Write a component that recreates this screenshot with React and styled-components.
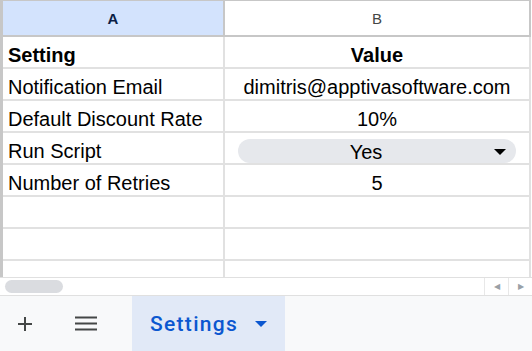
import styled, { createGlobalStyle } from "styled-components";

const GlobalStyle = createGlobalStyle`
  html, body {
    margin: 0;
    padding: 0;
    background: #ffffff;
  }
  body {
    font-family: "Liberation Sans", Arial, sans-serif;
  }
`;

export const Sheet = styled.div`
  width: 532px;
  height: 351px;
  display: flex;
  flex-direction: column;
  overflow: hidden;
  background: #ffffff;
`;

export const GridArea = styled.div`
  height: 277px;
  overflow: hidden;
  border-left: 3px solid #c7c7c7;
  display: grid;
  grid-template-columns: 222px 306px;
  grid-auto-rows: 32px;
  grid-template-rows: 37px;
  align-content: start;
`;

export const ColHeader = styled.div`
  box-sizing: border-box;
  border-top: 1px solid #c7c7c7;
  border-bottom: 2px solid #c7c7c7;
  border-right: 2px solid #c7c7c7;
  background: ${(p) => (p.$active ? "#d3e3fd" : "#ffffff")};
  color: ${(p) => (p.$active ? "#0b1e46" : "#444746")};
  font-weight: ${(p) => (p.$active ? 700 : 400)};
  font-size: 15px;
  display: flex;
  align-items: center;
  justify-content: center;
`;

export const Cell = styled.div`
  box-sizing: border-box;
  border-right: 2px solid #e1e1e1;
  border-bottom: 2px solid #e1e1e1;
  padding: 0 5px 1px;
  font-size: 20px;
  line-height: 22px;
  color: #000000;
  font-weight: ${(p) => (p.$bold ? 700 : 400)};
  display: flex;
  align-items: flex-end;
  justify-content: ${(p) => (p.$center ? "center" : "flex-start")};
  white-space: nowrap;
`;

export const ChipCell = styled(Cell)`
  padding: 6px 13px 0 13px;
  align-items: flex-start;
`;

export const Chip = styled.div`
  flex: 1;
  height: 24px;
  border-radius: 12px;
  background: #e6e8ec;
  display: flex;
  align-items: center;
  font-size: 20px;
`;

export const ChipLabel = styled.span`
  flex: 1;
  text-align: center;
  padding-top: 2px;
`;

export const ChipArrow = styled.svg`
  width: 12px;
  height: 6px;
  margin-right: 10px;
  margin-top: 1px;
`;

export const ScrollRow = styled.div`
  height: 19px;
  box-sizing: border-box;
  border-top: 1px solid #e0e0e0;
  border-bottom: 1px solid #e0e0e0;
  display: flex;
  align-items: center;
  padding-left: 5px;
`;

export const Thumb = styled.div`
  width: 58px;
  height: 13px;
  border-radius: 7px;
  background: #dadce0;
`;

export const ScrollButtons = styled.div`
  margin-left: auto;
  display: flex;
  height: 100%;
`;

export const ScrollButton = styled.div`
  width: 24px;
  box-sizing: border-box;
  border-left: 1px solid #e8e8e8;
  display: flex;
  align-items: center;
  justify-content: center;
  color: #9aa0a6;
  font-size: 8px;
`;

export const TabBar = styled.div`
  flex: 1;
  background: #f8f9fa;
  display: flex;
  align-items: stretch;
`;

export const IconButton = styled.div`
  width: ${(p) => p.$w}px;
  display: flex;
  align-items: center;
  justify-content: center;
  color: #444746;
`;

export const Tab = styled.div`
  margin-left: 10px;
  width: 153px;
  background: #e1e9f7;
  display: flex;
  align-items: center;
  padding-left: 18px;
  box-sizing: border-box;
  color: #0b57d0;
  font-family: Roboto, "Noto Sans", sans-serif;
  font-weight: 500;
  font-size: 21px;
  letter-spacing: 1.3px;
`;

export const TabArrow = styled.svg`
  width: 12px;
  height: 6px;
  margin-left: 17px;
`;

const rows = [
  { label: "Setting", value: "Value", bold: true },
  { label: "Notification Email", value: "dimitris@apptivasoftware.com" },
  { label: "Default Discount Rate", value: "10%" },
  { label: "Run Script", value: "Yes", chip: true },
  { label: "Number of Retries", value: "5" },
  { label: "", value: "" },
  { label: "", value: "" },
  { label: "", value: "" },
];

export default function App() {
  return (
    <>
      <GlobalStyle />
      <Sheet>
        <GridArea>
          <ColHeader $active>A</ColHeader>
          <ColHeader>B</ColHeader>
          {rows.map((r, i) => [
            <Cell key={`a${i}`} $bold={r.bold}>
              {r.label}
            </Cell>,
            r.chip ? (
              <ChipCell key={`b${i}`}>
                <Chip>
                  <ChipLabel>{r.value}</ChipLabel>
                  <ChipArrow viewBox="0 0 12 6">
                    <path d="M0 0h12L6 6z" fill="#000" />
                  </ChipArrow>
                </Chip>
              </ChipCell>
            ) : (
              <Cell key={`b${i}`} $center $bold={r.bold}>
                {r.value}
              </Cell>
            ),
          ])}
        </GridArea>
        <ScrollRow>
          <Thumb />
          <ScrollButtons>
            <ScrollButton>◀</ScrollButton>
            <ScrollButton>▶</ScrollButton>
          </ScrollButtons>
        </ScrollRow>
        <TabBar>
          <IconButton $w={50}>
            <svg width="16" height="16" viewBox="0 0 16 16">
              <path d="M8 1v14M1 8h14" stroke="#444746" strokeWidth="2" />
            </svg>
          </IconButton>
          <IconButton $w={72}>
            <svg width="22" height="15" viewBox="0 0 22 15">
              <path d="M0 1.5h22M0 7.5h22M0 13.5h22" stroke="#444746" strokeWidth="2" />
            </svg>
          </IconButton>
          <Tab>
            Settings
            <TabArrow viewBox="0 0 12 6">
              <path d="M0 0h12L6 6z" fill="#0b57d0" />
            </TabArrow>
          </Tab>
        </TabBar>
      </Sheet>
    </>
  );
}
